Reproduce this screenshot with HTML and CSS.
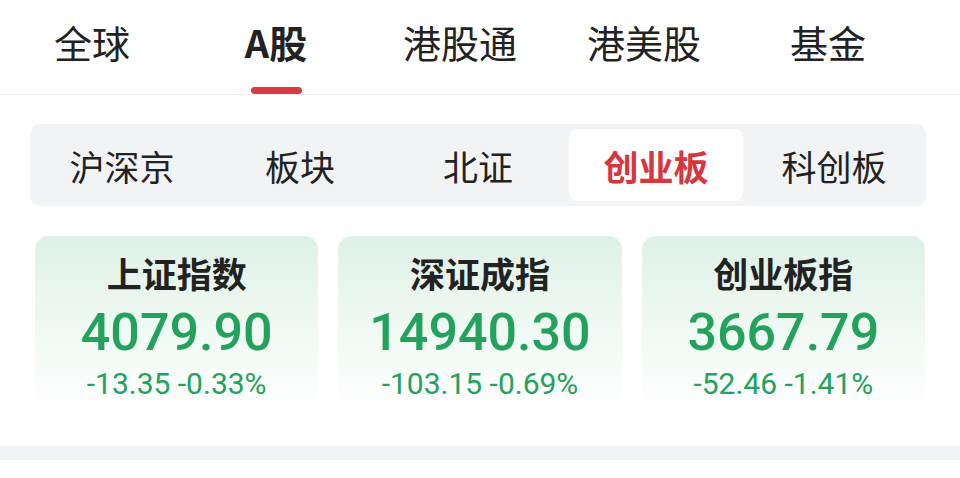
FILE: index.html
```html
<!DOCTYPE html>
<html lang="zh-CN">
<head>
<meta charset="utf-8">
<link rel="stylesheet" href="styles.css">
</head>
<body>
<div class="page">
  <nav class="tabs">
    <div class="tab"><span class="tab-label">全球</span><span class="tab-bar"></span></div>
    <div class="tab active"><span class="tab-label">A股</span><span class="tab-bar"></span></div>
    <div class="tab"><span class="tab-label">港股通</span><span class="tab-bar"></span></div>
    <div class="tab"><span class="tab-label">港美股</span><span class="tab-bar"></span></div>
    <div class="tab"><span class="tab-label">基金</span><span class="tab-bar"></span></div>
  </nav>
  <div class="segment">
    <div class="seg-item">沪深京</div>
    <div class="seg-item">板块</div>
    <div class="seg-item">北证</div>
    <div class="seg-item active">创业板</div>
    <div class="seg-item">科创板</div>
  </div>
  <div class="cards">
    <div class="card">
      <div class="card-title">上证指数</div>
      <div class="card-value">4079.90</div>
      <div class="card-change">-13.35 -0.33%</div>
    </div>
    <div class="card">
      <div class="card-title">深证成指</div>
      <div class="card-value">14940.30</div>
      <div class="card-change">-103.15 -0.69%</div>
    </div>
    <div class="card">
      <div class="card-title">创业板指</div>
      <div class="card-value">3667.79</div>
      <div class="card-change">-52.46 -1.41%</div>
    </div>
  </div>
  <div class="band"></div>
</div>
</body>
</html>
```
FILE: styles.css
```css
* { box-sizing: border-box; }
html, body { margin: 0; padding: 0; background: #ffffff; }
body {
  font-family: "Noto Sans CJK SC", "Noto Sans", sans-serif;
  color: #222222;
  width: 960px;
  height: 478px;
  overflow: hidden;
}
.tabs {
  display: grid;
  grid-template-columns: repeat(5, 184px);
  height: 95px;
  border-bottom: 1px solid #efefef;
}
.tab {
  display: flex;
  flex-direction: column;
  align-items: center;
}
.tab-label {
  font-size: 38px;
  line-height: 38px;
  margin-top: 23px;
  color: #222;
}
.tab-bar {
  margin-top: 26px;
  width: 51px;
  height: 7px;
  border-radius: 4px;
  background: transparent;
}
.tab.active .tab-label { font-weight: 700; }
.tab.active .tab-bar { background: #dc3a43; }

.segment {
  margin: 29px 34px 0 30px;
  height: 82px;
  background: #f2f3f5;
  border-radius: 10px;
  padding: 5px;
  display: grid;
  grid-template-columns: repeat(5, 1fr);
  gap: 4px;
}
.seg-item {
  display: flex;
  align-items: center;
  justify-content: center;
  font-size: 35px;
  color: #222;
  border-radius: 8px;
}
.seg-item.active {
  background: #ffffff;
  color: #d8363f;
  font-weight: 700;
}

.cards {
  margin: 30px 35px 0 35px;
  display: grid;
  grid-template-columns: repeat(3, 1fr);
  gap: 20px;
}
.card {
  height: 172px;
  border-radius: 14px;
  background: linear-gradient(180deg, #dff1e7 0%, #edf8f1 45%, #ffffff 100%);
  display: flex;
  flex-direction: column;
  align-items: center;
  padding-top: 17px;
}
.card-title {
  font-size: 35px;
  line-height: 40px;
  font-weight: 700;
  color: #222;
}
.card-value {
  margin-top: 10px;
  font-family: Roboto, "Noto Sans", sans-serif;
  font-size: 52px;
  line-height: 60px;
  font-weight: 500;
  color: #22a25a;
}
.card-change {
  margin-top: 3px;
  font-family: Roboto, "Noto Sans", sans-serif;
  font-size: 30px;
  line-height: 36px;
  color: #22a25a;
}
.band {
  margin-top: 38px;
  height: 14px;
  background: #f2f3f5;
}
```
